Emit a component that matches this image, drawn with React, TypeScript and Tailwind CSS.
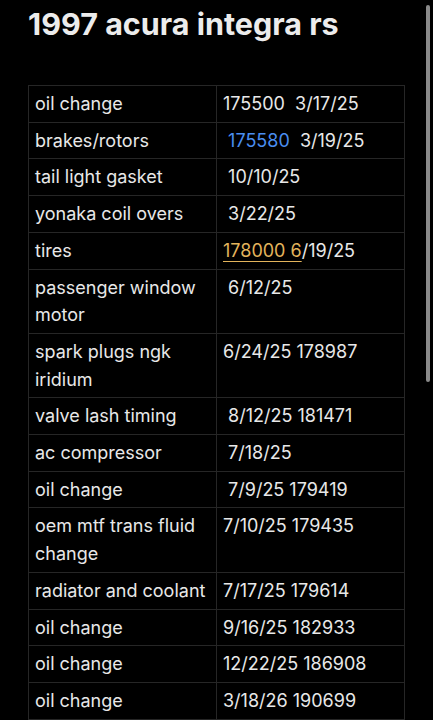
const rows: { task: string; value: React.ReactNode }[] = [
  { task: "oil change", value: "175500\u00a0 3/17/25" },
  {
    task: "brakes/rotors",
    value: (
      <>
        {"\u00a0"}
        <span className="text-[#4a8ef0]">175580</span>
        {"\u00a0 3/19/25"}
      </>
    ),
  },
  { task: "tail light gasket", value: "\u00a010/10/25" },
  { task: "yonaka coil overs", value: "\u00a03/22/25" },
  {
    task: "tires",
    value: (
      <>
        <span className="text-[#e3b45c] underline decoration-[#e3b45c] decoration-1 underline-offset-[4px]">178000 6</span>
        /19/25
      </>
    ),
  },
  { task: "passenger window motor", value: "\u00a06/12/25" },
  { task: "spark plugs ngk iridium", value: "6/24/25 178987" },
  { task: "valve lash timing", value: "\u00a08/12/25 181471" },
  { task: "ac compressor", value: "\u00a07/18/25" },
  { task: "oil change", value: "\u00a07/9/25 179419" },
  { task: "oem mtf trans fluid change", value: "7/10/25 179435" },
  { task: "radiator and coolant", value: "7/17/25 179614" },
  { task: "oil change", value: "9/16/25 182933" },
  { task: "oil change", value: "12/22/25 186908" },
  { task: "oil change", value: "3/18/26 190699" },
  { task: "", value: "" },
];

export default function App() {
  return (
    <div className="min-h-screen bg-black text-[#e8e8e8] font-['Inter',sans-serif]">
      <div className="pl-[28px] pr-[29px] pt-[5px]">
        <h1 className="text-[30.5px] font-bold leading-[37px] text-[#ececec]">
          1997 acura integra rs
        </h1>
        <table className="mt-[43px] w-[376px] table-fixed border-collapse">
          <tbody>
            {rows.map((r, i) => (
              <tr key={i}>
                <td className="w-[188px] border border-[#262626] px-[6px] py-[4px] align-top text-[18px] leading-[27.7px]">
                  {r.task}
                </td>
                <td className="w-[188px] border border-[#262626] px-[6px] py-[4px] align-top text-[18px] leading-[27.7px] whitespace-pre">
                  {r.value}
                </td>
              </tr>
            ))}
          </tbody>
        </table>
      </div>
      <div className="fixed right-[3px] top-[5px] h-[377px] w-[4px] rounded-full bg-[#8a8a8a]" />
    </div>
  );
}
